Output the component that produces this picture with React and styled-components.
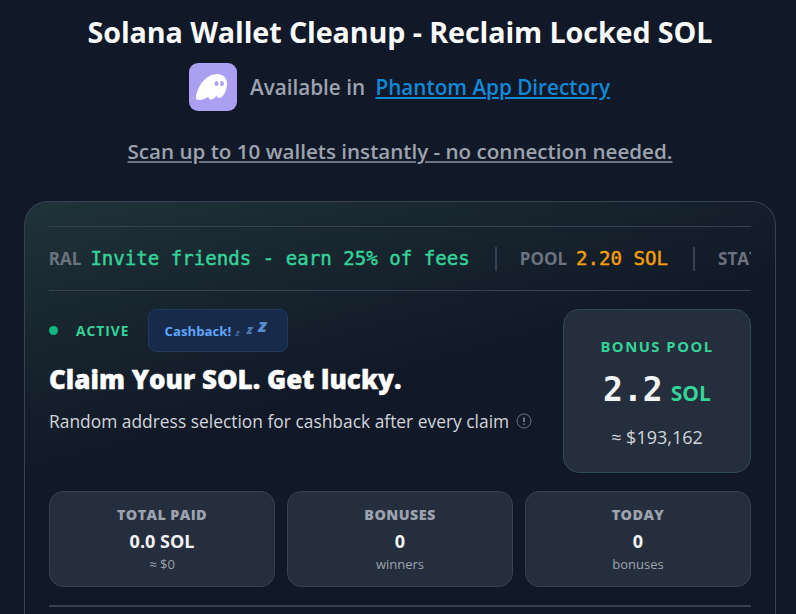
import React from "react";
import styled, { createGlobalStyle } from "styled-components";

const GlobalStyle = createGlobalStyle`
  html, body {
    margin: 0;
    height: 614px;
    overflow: hidden;
    background: #111827;
    font-family: "Open Sans", "Noto Sans", sans-serif;
  }
  * { box-sizing: border-box; }
`;

const Page = styled.div`
  padding: 13px 20px 0 24px;
  width: 796px;
`;
const Title = styled.h1`
  margin: 0;
  font-size: 28.7px;
  line-height: 38px;
  font-weight: 700;
  letter-spacing: -0.1px;
  color: #f9fafb;
  text-align: center;
`;
const Available = styled.div`
  display: flex;
  align-items: center;
  justify-content: center;
  gap: 13px;
  margin-top: 12px;
  margin-right: 1px;
  font-size: 20.7px;
  font-weight: 600;
  color: #9ca3af;
`;
const LogoBox = styled.div`
  width: 48px;
  height: 48px;
  border-radius: 9px;
  background: #ab9ff2;
  display: flex;
  align-items: center;
  justify-content: center;
`;
const DirectoryLink = styled.a`
  color: #1289d8;
  text-decoration: underline;
  margin-left: 5px;
`;
const Tagline = styled.p`
  margin: 26px 0 0;
  text-align: center;
  font-size: 20.6px;
  line-height: 28px;
  font-weight: 600;
  color: #9ca3af;
  text-decoration: underline;
  text-decoration-color: #6b7280;
`;
const Card = styled.section`
  margin-top: 36px;
  width: 752px;
  height: 440px;
  padding: 24px 24px 0;
  border: 1px solid #374151;
  border-bottom: none;
  border-radius: 24px 24px 0 0;
  background: linear-gradient(165deg, #203339 0%, #18262f 20%, #111827 44%, #111827 100%);
`;
const Ticker = styled.div`
  height: 65px;
  border-top: 1px solid #374151;
  border-bottom: 1px solid #374151;
  overflow: hidden;
  display: flex;
  align-items: center;
`;
const TickerTrack = styled.div`
  display: flex;
  align-items: center;
  flex: none;
  white-space: nowrap;
  transform: translateX(-51px);
`;
const TickerItem = styled.div`
  display: flex;
  align-items: center;
  gap: 9px;
  padding-right: 25px;
  margin-right: 23px;
  height: 24px;
  border-right: ${(props) => (props.$last ? "none" : "2px solid #374151")};
`;
const TickerLabel = styled.span`
  font-size: 17px;
  font-weight: 700;
  color: #6b7280;
`;
const TickerValue = styled.span`
  font-family: "DejaVu Sans Mono", monospace;
  font-size: 19.1px;
  -webkit-text-stroke: 0.45px ${(props) => props.$color};
  color: ${(props) => props.$color};
`;
const Hero = styled.div`
  display: flex;
  justify-content: space-between;
  margin-top: 18px;
`;
const HeroLeft = styled.div`
  display: flex;
  flex-direction: column;
`;
const StatusRow = styled.div`
  display: flex;
  align-items: center;
  height: 43px;
`;
const Dot = styled.span`
  width: 9px;
  height: 9px;
  border-radius: 50%;
  background: #10b981;
`;
const Active = styled.span`
  margin-left: 18px;
  font-size: 13.8px;
  font-weight: 700;
  letter-spacing: 1px;
  color: #34d399;
`;
const Cashback = styled.div`
  margin-left: 18px;
  width: 140px;
  height: 43px;
  padding-left: 16px;
  display: flex;
  align-items: center;
  border: 1px solid #1e3a5f;
  border-radius: 8px;
  background: #172a4a;
  font-size: 13.2px;
  font-weight: 700;
  color: #60a5fa;
`;
const Zed = styled.span`
  font-weight: 800;
  font-style: italic;
  color: ${(props) => props.$color};
  font-size: ${(props) => props.$size}px;
  margin-left: ${(props) => props.$gap}px;
  transform: translateY(${(props) => props.$up}px);
`;
const Headline = styled.h2`
  margin: 8px 0 0;
  font-size: 26px;
  line-height: 38px;
  font-weight: 800;
  -webkit-text-stroke: 0.4px #fff;
  color: #fff;
`;
const Sub = styled.p`
  margin: 11px 0 0;
  display: flex;
  align-items: center;
  gap: 7px;
  font-size: 17.4px;
  line-height: 24px;
  color: #d1d5db;
`;
const InfoIcon = styled.svg`
  width: 16px;
  height: 16px;
`;
const BonusCard = styled.div`
  width: 188px;
  height: 164px;
  border: 1px solid #2f4a52;
  border-radius: 16px;
  background: #252e3c;
  display: flex;
  flex-direction: column;
  align-items: center;
  padding-top: 26px;
`;
const BonusLabel = styled.div`
  font-size: 14.8px;
  line-height: 20px;
  font-weight: 700;
  letter-spacing: 1.5px;
  color: #34d399;
`;
const BonusAmount = styled.div`
  margin-top: 12px;
  display: flex;
  align-items: baseline;
  gap: 8px;
`;
const BonusNumber = styled.span`
  font-family: "DejaVu Sans Mono", monospace;
  font-size: 33px;
  line-height: 44px;
  font-weight: 700;
  color: #f3f4f6;
`;
const BonusUnit = styled.span`
  font-size: 21px;
  font-weight: 700;
  color: #34d399;
`;
const BonusUsd = styled.div`
  margin-top: 13px;
  font-size: 18px;
  line-height: 24px;
  font-weight: 500;
  color: #d1d5db;
`;
const StatGrid = styled.div`
  margin-top: 18px;
  display: grid;
  grid-template-columns: repeat(3, 226px);
  gap: 12px;
`;
const Stat = styled.div`
  height: 96px;
  border: 1px solid #374151;
  border-radius: 14px;
  background: #252e3c;
  display: flex;
  flex-direction: column;
  align-items: center;
  padding-top: 13px;
`;
const StatLabel = styled.div`
  font-size: 14.4px;
  line-height: 20px;
  font-weight: 800;
  letter-spacing: 0.4px;
  color: #9ca3af;
`;
const StatValue = styled.div`
  margin-top: 3px;
  font-size: 18px;
  line-height: 26px;
  font-weight: 700;
  color: #f3f4f6;
`;
const StatNote = styled.div`
  font-size: 13px;
  line-height: 20px;
  color: #9ca3af;
`;
const Rule = styled.hr`
  margin: 18px 0 0;
  border: none;
  height: 2px;
  background: #374151;
`;

const PhantomLogo = () => (
  <svg width="36" height="34" viewBox="0 0 36 34">
    <path
      d="M3.5 30c-2.6 0-3-3-2-6C4.5 13 12.500 4 22 4c7 0 10.500 5 10 11-.6 7-4.500 13-8 13-1.700 0-2.300-1.500-2.500-2.800C20.300 27.500 18 29.500 16 29.500c-1.800 0-2.600-1.500-2.700-3C11 28.500 7 30 3.500 30z"
      fill="#fff"
    />
    <ellipse cx="21.500" cy="13.500" rx="1.900" ry="2.500" fill="#ab9ff2" />
    <ellipse cx="27" cy="13.500" rx="1.900" ry="2.500" fill="#ab9ff2" />
  </svg>
);

export default function App() {
  return (
    <Page>
      <GlobalStyle />
      <Title>Solana Wallet Cleanup - Reclaim Locked SOL</Title>
      <Available>
        <LogoBox>
          <PhantomLogo />
        </LogoBox>
        <span>
          Available in <DirectoryLink>Phantom App Directory</DirectoryLink>
        </span>
      </Available>
      <Tagline>Scan up to 10 wallets instantly - no connection needed.</Tagline>
      <Card>
        <Ticker>
          <TickerTrack>
            <TickerItem>
              <TickerLabel>REFERRAL</TickerLabel>
              <TickerValue $color="#34d399">Invite friends - earn 25% of fees</TickerValue>
            </TickerItem>
            <TickerItem>
              <TickerLabel>POOL</TickerLabel>
              <TickerValue $color="#f59e0b">2.20 SOL</TickerValue>
            </TickerItem>
            <TickerItem $last>
              <TickerLabel>STATUS</TickerLabel>
            </TickerItem>
          </TickerTrack>
        </Ticker>
        <Hero>
          <HeroLeft>
            <StatusRow>
              <Dot />
              <Active>ACTIVE</Active>
              <Cashback>
                Cashback!
                <Zed $size={9} $gap={4} $up={2} $color="#3d5f8f">z</Zed>
                <Zed $size={13} $gap={7} $up={-2} $color="#4d7ab8">z</Zed>
                <Zed $size={18} $gap={5} $up={-6} $color="#5a8ccf">z</Zed>
              </Cashback>
            </StatusRow>
            <Headline>Claim Your SOL. Get lucky.</Headline>
            <Sub>
              Random address selection for cashback after every claim
              <InfoIcon viewBox="0 0 16 16">
                <circle cx="8" cy="8" r="7" fill="none" stroke="#6b7280" />
                <path d="M8 4.500v4.500M8 10.500v1.200" stroke="#9ca3af" strokeWidth="1.300" />
              </InfoIcon>
            </Sub>
          </HeroLeft>
          <BonusCard>
            <BonusLabel>BONUS POOL</BonusLabel>
            <BonusAmount>
              <BonusNumber>2.2</BonusNumber>
              <BonusUnit>SOL</BonusUnit>
            </BonusAmount>
            <BonusUsd>≈ $193,162</BonusUsd>
          </BonusCard>
        </Hero>
        <StatGrid>
          <Stat>
            <StatLabel>TOTAL PAID</StatLabel>
            <StatValue>0.0 SOL</StatValue>
            <StatNote>≈ $0</StatNote>
          </Stat>
          <Stat>
            <StatLabel>BONUSES</StatLabel>
            <StatValue>0</StatValue>
            <StatNote>winners</StatNote>
          </Stat>
          <Stat>
            <StatLabel>TODAY</StatLabel>
            <StatValue>0</StatValue>
            <StatNote>bonuses</StatNote>
          </Stat>
        </StatGrid>
        <Rule />
      </Card>
    </Page>
  );
}
